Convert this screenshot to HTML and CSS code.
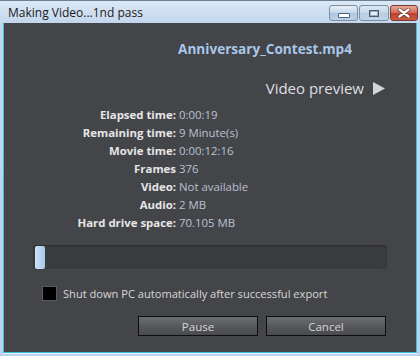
FILE: index.html
```html
<!DOCTYPE html>
<html>
<head>
<meta charset="utf-8">
<link rel="stylesheet" href="styles.css">
</head>
<body>
<div class="window">
  <div class="titlebar">
    <span class="title">Making Video...1nd pass</span>
    <div class="controls">
      <div class="ctl min"><span class="dash"></span></div>
      <div class="ctl max"><span class="box"></span></div>
      <div class="ctl close">
        <svg width="16" height="10" viewBox="0 0 16 10"><path d="M3.5 1.5 L12.5 8.5 M12.5 1.5 L3.5 8.5" stroke="#5a2a22" stroke-width="3.6" stroke-linecap="round"/><path d="M3.5 1.5 L12.5 8.5 M12.5 1.5 L3.5 8.5" stroke="#fff" stroke-width="2.4" stroke-linecap="round"/></svg>
      </div>
    </div>
  </div>
  <div class="content">
    <div class="filename">Anniversary_Contest.mp4</div>
    <div class="preview"><span>Video preview</span>
      <svg width="14" height="13" viewBox="0 0 14 13"><path d="M1 0 L13 6.5 L1 13 Z" fill="#d4d5d8"/></svg>
    </div>
    <div class="info">
      <div class="lbl">Elapsed time:</div><div class="val">0:00:19</div>
      <div class="lbl">Remaining time:</div><div class="val">9 Minute(s)</div>
      <div class="lbl">Movie time:</div><div class="val">0:00:12:16</div>
      <div class="lbl">Frames</div><div class="val">376</div>
      <div class="lbl">Video:</div><div class="val">Not available</div>
      <div class="lbl">Audio:</div><div class="val">2 MB</div>
      <div class="lbl">Hard drive space:</div><div class="val">70.105 MB</div>
    </div>
    <div class="progress"><div class="fill"></div></div>
    <label class="check"><span class="box"></span><span>Shut down PC automatically after successful export</span></label>
    <div class="buttons">
      <button class="btn">Pause</button>
      <button class="btn">Cancel</button>
    </div>
  </div>
</div>
</body>
</html>
```
FILE: styles.css
```css
html, body { margin: 0; padding: 0; }
body { width: 420px; height: 356px; overflow: hidden; background: #c9dbee; }
.window {
  width: 420px; height: 356px; box-sizing: border-box;
  background: linear-gradient(to bottom, #dce8f5 0px, #c2d6ec 23px, #bcd2ea 100%);
  border-top: 1px solid #6c7f93;
  padding: 0 3px 3px 3px;
  display: flex; flex-direction: column;
  font-family: "Open Sans", "Noto Sans", sans-serif;
}
.titlebar {
  height: 22px; display: flex; align-items: center; justify-content: space-between;
}
.title { font-size: 12px; color: #1a1a1a; padding-left: 5px; padding-top: 1px; }
.controls { display: flex; gap: 1px; align-self: flex-start; margin-top: 4px; margin-right: -1px; }
.ctl {
  height: 16px; box-sizing: border-box; border: 1px solid #7e8ea0; border-radius: 3px;
  display: flex; align-items: center; justify-content: center;
}
.min { width: 29px; background: linear-gradient(to bottom, #e8f0f8, #c4d6ea 50%, #aec6e0 51%, #b8d0ea); }
.max { width: 30px; background: linear-gradient(to bottom, #dde7f2, #c6d6e8 50%, #b8cce2 51%, #c2d6ea); }
.close { width: 28px; border-color: #7a3a30; background: linear-gradient(to bottom, #e8a898, #d06a58 50%, #c0402e 51%, #cc5a40); }
.dash { width: 10px; height: 3px; background: #fff; border: 1px solid #50607a; margin-top: 4px; border-radius: 1px; }
.max .box { width: 8px; height: 5px; border: 1px solid #4a5a70; background: #e8eef6; box-shadow: inset 0 0 0 1px #9aaabb; }
.content {
  flex: 1; background: #444549;
  border: 1px solid #3ac0e6; border-top: none;
  box-shadow: 0 1px 0 #e6f4fb;
  display: flex; flex-direction: column;
  color: #e4e4e4;
}
.filename {
  font-size: 13.6px; font-weight: bold; color: #a9c6ea;
  padding-left: 174px; margin-top: 16px; line-height: 20px;
}
.preview {
  display: flex; align-items: center; justify-content: flex-end; gap: 8px;
  padding-right: 30px; margin-top: 19px; line-height: 20px; font-size: 15px; color: #dedfe2;
}
.preview svg { margin-top: 1px; }
.info {
  display: grid; grid-template-columns: 172px auto; column-gap: 3px;
  margin-top: 8px; line-height: 18px; font-size: 11.4px;
}
.lbl { text-align: right; font-weight: bold; color: #e6e6e6; }
.val { color: #b9c2d2; }
.progress {
  margin: 13px 29px 0 29px; height: 25px; border-radius: 4px;
  background: #3a3b3e; box-shadow: inset 0 1px 2px #2a2b2d, inset 0 -1px 0 #48494d;
  padding: 1px 2px; box-sizing: border-box;
}
.fill { width: 10px; height: 23px; border-radius: 2px; background: linear-gradient(to right, #cfe2f6, #a9c8ea); }
.check {
  display: flex; align-items: center; gap: 6px; margin: 16px 0 0 38px;
  font-size: 11.1px; color: #d8d8d8;
}
.check .box { width: 13px; height: 13px; background: #000; border: 1px solid #5a5b5f; }
.buttons { display: flex; justify-content: flex-end; gap: 8px; margin: 15px 30px 0 0; }
.btn {
  width: 120px; height: 20px; border: 1px solid #0e0e10; padding: 0;
  background: linear-gradient(to bottom, #6c6d71, #545559 60%, #4a4b4f);
  color: #d4d4d4; font-family: inherit; font-size: 11.5px;
}
```
